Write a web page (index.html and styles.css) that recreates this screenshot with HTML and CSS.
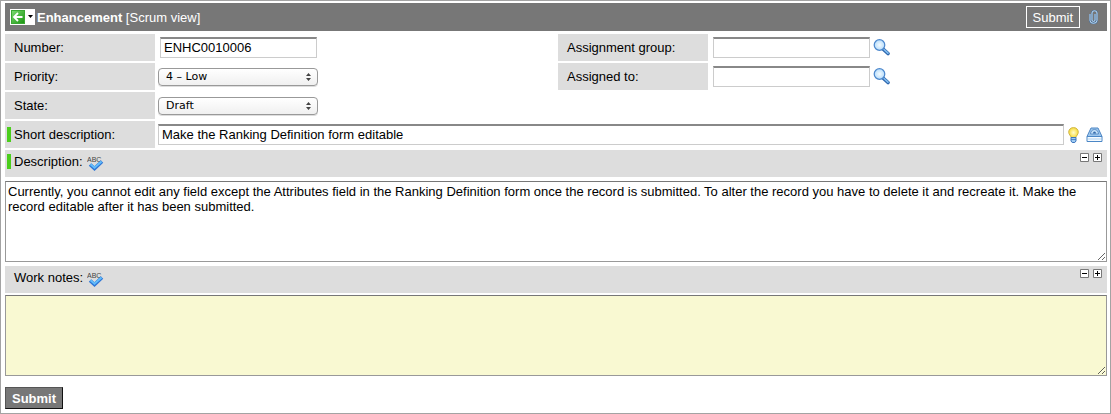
FILE: index.html
```html
<!DOCTYPE html>
<html lang="en">
<head>
<meta charset="utf-8">
<title>Enhancement</title>
<link rel="stylesheet" href="styles.css">
</head>
<body>
<svg class="defs" aria-hidden="true">
  <defs>
    <linearGradient id="green" x2="1" y2="1"><stop stop-color="#7ddb72"/><stop offset="1" stop-color="#18930f"/></linearGradient>
    <radialGradient id="glass"><stop stop-color="#f4fbff"/><stop offset="1" stop-color="#b5dcfb"/></radialGradient>
    <radialGradient id="glow"><stop stop-color="#fffbd0"/><stop offset="1" stop-color="#f7dc38"/></radialGradient>
  </defs>
  <symbol id="lens" viewBox="0 0 17 17">
    <path d="M10 10l5 4.500" stroke="#2d67ae" stroke-width="3.600" stroke-linecap="round"/>
    <path d="M11 10.500l4 3.700" stroke="#83bdf0" stroke-width="1.600" stroke-linecap="round"/>
    <circle cx="6.500" cy="6" r="5.300" fill="url(#glass)" stroke="#4a86cc" stroke-width="1.200"/>
  </symbol>
  <symbol id="check" viewBox="0 0 17 15">
    <path d="M3 8.500l4.500 4L15 5.500" fill="none" stroke="#2f76d6" stroke-width="3.600"/>
    <path d="M3.500 8.300l4 3.400L14.500 5.500" fill="none" stroke="#62bdfb" stroke-width="2"/>
  </symbol>
  <symbol id="minus" viewBox="0 0 9 9"><path d="M.5.5h8v8h-8z" fill="#fff" stroke="#777"/><path d="M2 4.500h5" stroke="#000"/></symbol>
  <symbol id="plus" viewBox="0 0 9 9"><path d="M.5.5h8v8h-8z" fill="#fff" stroke="#777"/><path d="M2 4.500h5M4.500 2v5" stroke="#000"/></symbol>
</svg>
<form class="record">
  <header class="bar">
    <button type="button" class="back" aria-label="Back">
      <svg width="25" height="16" viewBox="0 0 25 16">
        <path d="M0 0h25v16H0z" fill="#fff"/>
        <rect x="1.500" y="1.500" width="13" height="13" fill="url(#green)" stroke="#3aa832"/>
        <path d="M12.500 8H4.500M8 4L4 8l4 4" fill="none" stroke="#fff" stroke-width="1.800"/>
        <path d="M18 6h5l-2.500 3z"/>
      </svg>
    </button>
    <h1 class="title"><b>Enhancement</b> [Scrum view]</h1>
    <button type="button" class="submit-top">Submit</button>
    <button type="button" class="attach" aria-label="Attachments">
      <svg width="9" height="14" viewBox="0 0 9 14" fill="none"><path d="M1 4v6.500a3.500 2.800 0 0 0 7 0V3a2.500 2.200 0 0 0-5 0v7a1.500 1.500 0 0 0 3 0V4" stroke="#3f6da0" stroke-width="1.600"/><path d="M1 4v6.500a3.500 2.800 0 0 0 7 0V3a2.500 2.200 0 0 0-5 0v7a1.500 1.500 0 0 0 3 0V4" stroke="#cfe8fa" stroke-width=".9"/></svg>
    </button>
  </header>

  <div class="columns">
    <div class="column">
      <div class="row"><label class="label" for="number">Number:</label><div class="field inset"><input class="text" id="number" value="ENHC0010006"></div></div>
      <div class="row"><label class="label" for="priority">Priority:</label><div class="field"><select class="pick" id="priority"><option>4 – Low</option></select><svg class="arrows" width="5" height="8" viewBox="0 0 5 8"><path d="M0 3l2.500-3L5 3zM0 5h5L2.500 8z" fill="#444"/></svg></div></div>
      <div class="row"><label class="label" for="state">State:</label><div class="field"><select class="pick" id="state"><option>Draft</option></select><svg class="arrows" width="5" height="8" viewBox="0 0 5 8"><path d="M0 3l2.500-3L5 3zM0 5h5L2.500 8z" fill="#444"/></svg></div></div>
    </div>
    <div class="column">
      <div class="row"><label class="label" for="group">Assignment group:</label><div class="field inset"><input class="text" id="group"><button type="button" class="icon" aria-label="Look up group"><svg width="17" height="17"><use href="#lens"/></svg></button></div></div>
      <div class="row"><label class="label" for="assigned">Assigned to:</label><div class="field inset"><input class="text" id="assigned"><button type="button" class="icon" aria-label="Look up user"><svg width="17" height="17"><use href="#lens"/></svg></button></div></div>
    </div>
  </div>

  <div class="row">
    <label class="label required" for="short">Short description:</label>
    <div class="field wide">
      <input class="text" id="short" value="Make the Ranking Definition form editable">
      <button type="button" class="icon" aria-label="Suggestion">
        <svg width="11" height="16" viewBox="0 0 11 16"><path d="M5.500.6C2.500.6.700 2.700.700 5.200c0 2.400 2.100 3.300 2.500 5.500h4.600c.4-2.200 2.500-3.100 2.500-5.500C10.300 2.700 8.500.6 5.500.6z" fill="url(#glow)" stroke="#d0b64a"/><path d="M3 10.500h5v3.500l-1.200 1.500H4.200L3 14z" fill="#9fcbf2" stroke="#3b74bd"/><path d="M3 12.500h5" stroke="#3b74bd" stroke-width=".8"/></svg>
      </button>
      <button type="button" class="icon" aria-label="Search knowledge">
        <svg width="17" height="16" viewBox="0 0 17 16"><path d="M5 1h7l4 8.500H1z" fill="#9cc6ee" stroke="#4f87c4"/><path d="M4.500 7a4 4.500 0 0 1 8 0z" fill="#c4e0f8" stroke="#4a80bd" stroke-width=".8"/><path d="M7 6.500a1.500 2 0 0 1 3 0z" fill="#326aab"/><path d="M1 9.500h15v5H1z" fill="#f6fbff" stroke="#4b87c6"/><path d="M2 12h13" stroke="#acd1f1"/></svg>
      </button>
    </div>
  </div>

  <div class="section required">
    <label for="description">Description:</label>
    <button type="button" class="icon" aria-label="Check spelling"><svg width="17" height="15"><text class="abc" x="0" y="6">ABC</text><use href="#check"/></svg></button>
    <div class="sizers">
      <button type="button" class="icon" aria-label="Shrink"><svg width="9" height="9"><use href="#minus"/></svg></button>
      <button type="button" class="icon" aria-label="Expand"><svg width="9" height="9"><use href="#plus"/></svg></button>
    </div>
  </div>
  <textarea class="area" id="description">Currently, you cannot edit any field except the Attributes field in the Ranking Definition form once the record is submitted. To alter the record you have to delete it and recreate it. Make the record editable after it has been submitted.</textarea>

  <div class="section">
    <label for="notes">Work notes:</label>
    <button type="button" class="icon" aria-label="Check spelling"><svg width="17" height="15"><text class="abc" x="0" y="6">ABC</text><use href="#check"/></svg></button>
    <div class="sizers">
      <button type="button" class="icon" aria-label="Shrink"><svg width="9" height="9"><use href="#minus"/></svg></button>
      <button type="button" class="icon" aria-label="Expand"><svg width="9" height="9"><use href="#plus"/></svg></button>
    </div>
  </div>
  <textarea class="area notes" id="notes"></textarea>

  <button type="submit" class="submit">Submit</button>
</form>
</body>
</html>
```
FILE: styles.css
```css
* { box-sizing: border-box; }
body {
  margin: 0;
  background: #fff;
  color: #000;
  font: 13px/15px "Liberation Sans", Arial, sans-serif;
}
button, input, select, textarea { font: inherit; color: inherit; margin: 0; }
button { cursor: pointer; }
svg { display: block; }
.defs { position: absolute; width: 0; height: 0; }
.abc { font: 7px "Liberation Sans", sans-serif; fill: #444; }

.record {
  display: flex;
  flex-direction: column;
  gap: 2px;
  border: 1px solid #a3a3a3;
  padding: 2px 3px 4px 4px;
}
.bar {
  display: flex;
  align-items: center;
  height: 28px;
  margin-bottom: 1px;
  padding: 0 9px 0 5px;
  background: #777;
  color: #fff;
}
.back, .attach, .icon { padding: 0; border: 0; background: none; }
.title { flex: 1; margin: 0 0 0 2px; font-size: 13px; font-weight: normal; }
.submit-top {
  height: 22px;
  padding: 0 6px;
  border: 1px solid #fff;
  background: none;
}
.attach { margin-left: 9px; }

.columns { display: grid; grid-template-columns: 1fr 1fr; gap: 4px; align-items: start; }
.column { display: flex; flex-direction: column; gap: 2px; }
.row { display: flex; gap: 3px; }
.label {
  flex: none;
  width: 150px;
  height: 27px;
  padding: 6px 9px;
  background: #ddd;
}
.field { display: flex; flex: 1; align-items: center; position: relative; }
.inset { padding-left: 2px; }
.text {
  width: 157px;
  height: 21px;
  padding: 0 3px 2px;
  border: 1px solid #ccc;
  border-top: 2px solid #888;
  background: #fff;
}
.inset .icon { margin-left: 3px; }
.wide { gap: 4px; padding-right: 4px; }
.wide .text { flex: 1; width: auto; }
.wide .icon + .icon { margin-left: 3px; }
.pick {
  appearance: none;
  width: 160px;
  height: 18px;
  padding: 0 20px 0 7px;
  border: 1px solid #999;
  border-radius: 4px;
  background: linear-gradient(#fff, #f0f0f0);
  box-shadow: 0 1px 0 #ddd;
  font: 11px/15px "DejaVu Sans", sans-serif;
}
.arrows { position: absolute; left: 148px; pointer-events: none; }

.section {
  display: flex;
  align-items: flex-start;
  gap: 4px;
  height: 27px;
  padding: 4px 5px 0 9px;
  background: #ddd;
}
.section > .icon { margin-top: 2px; }
.sizers { display: flex; gap: 4px; margin: -1px 0 0 auto; }
.required { position: relative; }
.required::before {
  content: "";
  position: absolute;
  top: 4px;
  left: 2px;
  width: 4px;
  height: 15px;
  background: #4bce1c;
}
.label.required::before { top: 6px; }

.area {
  display: block;
  width: 100%;
  height: 81px;
  margin: 2px 0;
  padding: 2px;
  border: 1px solid #999;
  border-top-color: #777;
  background: #fff;
  resize: vertical;
}
.notes { margin: 0 0 9px; background: #f9f9d2; }
.submit {
  align-self: flex-start;
  height: 22px;
  padding: 0 6px;
  border: 1px solid #555;
  border-right-color: #111;
  border-bottom-color: #111;
  background: #777;
  color: #fff;
  font-weight: bold;
}
```
